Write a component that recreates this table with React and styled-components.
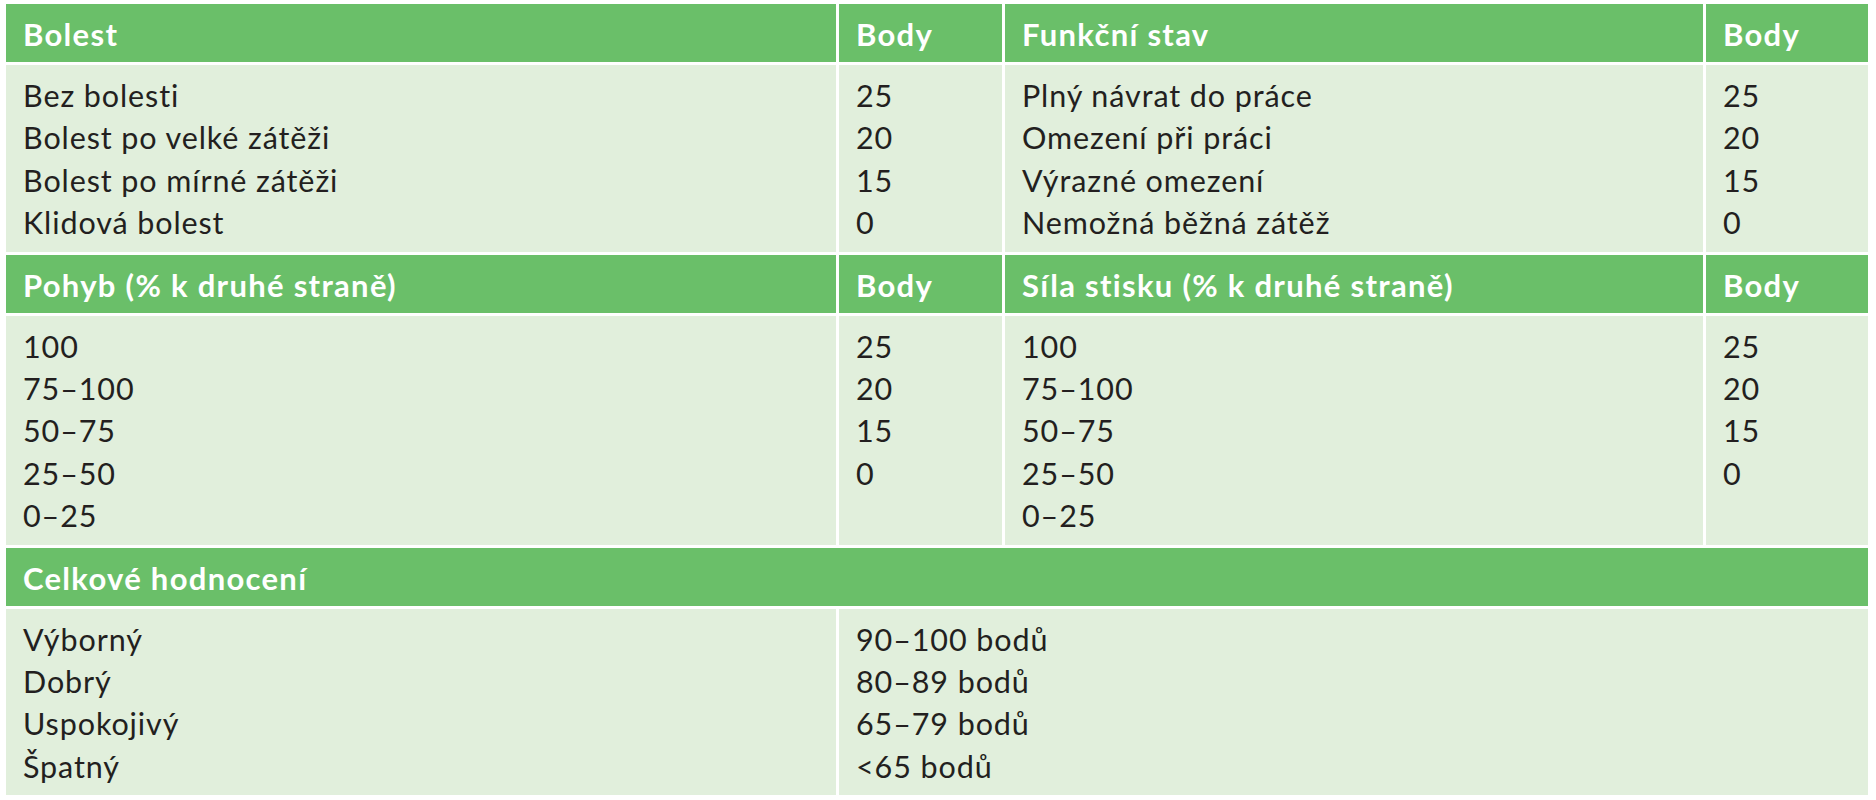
import React from 'react';
import styled, { createGlobalStyle } from 'styled-components';

const GlobalStyle = createGlobalStyle`
  html, body {
    margin: 0;
    padding: 0;
    background: #ffffff;
  }
  body {
    font-family: Lato, "Open Sans", sans-serif;
    color: #231f20;
  }
`;

const Page = styled.div`
  padding: 4px 8px 0 6px;
`;

const Table = styled.div`
  display: grid;
  grid-template-columns: 830px 163px 698px 162px;
  column-gap: 3px;
  row-gap: 3px;
  background: #ffffff;
`;

const HeadCell = styled.div`
  grid-column: span ${(p) => p.span || 1};
  background: #6abf69;
  color: #ffffff;
  font-weight: 700;
  font-size: 31px;
  letter-spacing: 1.3px;
  line-height: 36px;
  height: 58px;
  box-sizing: border-box;
  padding: 12px 17px 0;
  white-space: nowrap;
`;

const BodyCell = styled.div`
  grid-column: span ${(p) => p.span || 1};
  background: #e1efdc;
  font-size: 30.5px;
  letter-spacing: 0.9px;
  line-height: 42.4px;
  padding: 9px 17px 8px;
  white-space: nowrap;
`;

const Line = styled.div``;

const sections = [
  {
    left: 'Bolest',
    right: 'Funkční stav',
    leftRows: ['Bez bolesti', 'Bolest po velké zátěži', 'Bolest po mírné zátěži', 'Klidová bolest'],
    leftPts: ['25', '20', '15', '0'],
    rightRows: ['Plný návrat do práce', 'Omezení při práci', 'Výrazné omezení', 'Nemožná běžná zátěž'],
    rightPts: ['25', '20', '15', '0'],
  },
  {
    left: 'Pohyb (% k druhé straně)',
    right: 'Síla stisku (% k druhé straně)',
    leftRows: ['100', '75–100', '50–75', '25–50', '0–25'],
    leftPts: ['25', '20', '15', '0'],
    rightRows: ['100', '75–100', '50–75', '25–50', '0–25'],
    rightPts: ['25', '20', '15', '0'],
  },
];

const totals = [
  ['Výborný', '90–100 bodů'],
  ['Dobrý', '80–89 bodů'],
  ['Uspokojivý', '65–79 bodů'],
  ['Špatný', '<65 bodů'],
];

const Lines = ({ items }) => items.map((t, i) => <Line key={i}>{t}</Line>);

export default function App() {
  return (
    <Page>
      <GlobalStyle />
      <Table>
        {sections.map((s, i) => (
          <React.Fragment key={i}>
            <HeadCell>{s.left}</HeadCell>
            <HeadCell>Body</HeadCell>
            <HeadCell>{s.right}</HeadCell>
            <HeadCell>Body</HeadCell>
            <BodyCell><Lines items={s.leftRows} /></BodyCell>
            <BodyCell><Lines items={s.leftPts} /></BodyCell>
            <BodyCell><Lines items={s.rightRows} /></BodyCell>
            <BodyCell><Lines items={s.rightPts} /></BodyCell>
          </React.Fragment>
        ))}
        <HeadCell span={4}>Celkové hodnocení</HeadCell>
        <BodyCell><Lines items={totals.map((t) => t[0])} /></BodyCell>
        <BodyCell span={3}><Lines items={totals.map((t) => t[1])} /></BodyCell>
      </Table>
    </Page>
  );
}
